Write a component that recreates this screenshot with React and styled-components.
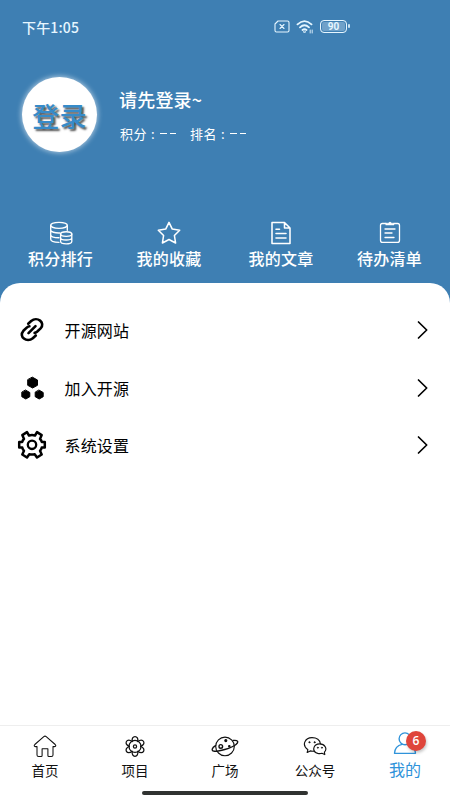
import React from "react";
import styled, { createGlobalStyle } from "styled-components";

const GlobalStyle = createGlobalStyle`
  * { box-sizing: border-box; }
  body {
    margin: 0;
    background: #fff;
    font-family: "Noto Sans CJK SC", "Noto Sans", sans-serif;
  }
`;

const Screen = styled.main`
  width: 450px;
  height: 800px;
  display: flex;
  flex-direction: column;
  overflow: hidden;
  background: #3e7fb3;
`;

const StatusBar = styled.header`
  height: 53px;
  padding: 0 103px 0 22px;
  display: flex;
  align-items: center;
  justify-content: space-between;
  color: #e6f6ff;
`;

const Clock = styled.time`
  font: 500 14px/20px "Noto Sans CJK SC", sans-serif;
  letter-spacing: 0.15px;
`;

const StatusIcons = styled.div`
  display: flex;
  align-items: center;
  gap: 6px;
`;

const Icon = styled.svg`
  display: block;
  flex: none;
  fill: none;
  stroke: currentColor;
  stroke-linecap: round;
  stroke-linejoin: round;
`;

const Battery = styled.span`
  position: relative;
  width: 27px;
  height: 13px;
  border: 1.5px solid #e6f6ff;
  border-radius: 4px;
  background: #6fa1c9;
  box-shadow: inset 0 0 0 1px #3e7fb3;
  display: flex;
  align-items: center;
  justify-content: center;
  font: 700 10px/10px Roboto, sans-serif;
  &::after {
    content: "";
    position: absolute;
    right: -4px;
    top: 3px;
    width: 2px;
    height: 4px;
    border-radius: 1px;
    background: #c9e2f2;
  }
`;

const Profile = styled.section`
  height: 123px;
  padding-left: 22px;
  display: flex;
  align-items: center;
  gap: 22px;
  color: #fff;
`;

const Avatar = styled.div`
  width: 75px;
  height: 75px;
  border-radius: 50%;
  background: #fff;
  box-shadow: 0 0 5px 1px rgba(255, 255, 255, 0.55);
  display: flex;
  align-items: center;
  justify-content: center;
  color: #368bc9;
  font-size: 27px;
  font-weight: 500;
  line-height: 40px;
  letter-spacing: 0.3px;
  padding-top: 2px;
  text-shadow: 2px 2px 2px rgba(20, 20, 20, 0.75);
`;

const UserInfo = styled.div`
  display: flex;
  flex-direction: column;
  gap: 12px;
`;

const UserName = styled.h1`
  margin: 0;
  font-size: 18px;
  font-weight: 500;
  line-height: 26px;
  letter-spacing: 0.2px;
`;

const Stats = styled.div`
  display: flex;
  gap: 14px;
  padding-left: 1px;
  font-size: 13px;
  line-height: 20px;
`;

const Stat = styled.span`
  display: flex;
  align-items: center;
  letter-spacing: 0.5px;
`;

const Colon = styled.span`
  width: 12px;
  text-align: center;
`;

const Dashes = styled.span`
  display: flex;
  gap: 3px;
  padding-left: 1px;
  &::before,
  &::after {
    content: "";
    width: 6.5px;
    height: 1px;
    background: #fff;
  }
`;

const Shortcuts = styled.nav`
  height: 107px;
  padding: 45px 0 0 28px;
  display: grid;
  grid-template-columns: 108.5px 112px 108.5px 65px;
  color: #fff;
`;

const Shortcut = styled.div`
  width: 65px;
  display: flex;
  flex-direction: column;
  align-items: center;
  gap: 1px;
  font-size: 16px;
  font-weight: 500;
  line-height: 24px;
  letter-spacing: 0.2px;
  white-space: nowrap;
`;

const Panel = styled.section`
  flex: 1;
  padding-top: 18.5px;
  border-radius: 20px 20px 0 0;
  background: #fff;
`;

const MenuRow = styled.div`
  height: 57.5px;
  padding: 0 20px 0 17px;
  display: grid;
  grid-template-columns: 30px 1fr 14px;
  column-gap: 17.5px;
  align-items: center;
  color: #000;
  font-size: 16px;
  line-height: 24px;
  letter-spacing: 0.15px;
`;

const TabBar = styled.nav`
  height: 66px;
  border-top: 1px solid #eee;
  background: #fff;
  display: grid;
  grid-template-columns: repeat(5, 90px);
`;

const Tab = styled.div`
  padding-top: ${(p) => (p.$active ? "5px" : "9px")};
  display: flex;
  flex-direction: column;
  align-items: center;
  gap: ${(p) => (p.$active ? "1px" : "0")};
  color: ${(p) => (p.$active ? "#2f93da" : "#111")};
  font-size: ${(p) => (p.$active ? "16px" : "13.5px")};
  line-height: 22px;
`;

const IconHolder = styled.span`
  position: relative;
`;

const Badge = styled.span`
  position: absolute;
  left: 13px;
  top: 0;
  width: 20px;
  height: 20px;
  border-radius: 50%;
  background: #df453b;
  box-shadow: 1px 2px 3px rgba(0, 0, 0, 0.22);
  color: #fff;
  font: 600 12px/20px "Open Sans", sans-serif;
  text-align: center;
`;

const HomeBar = styled.footer`
  height: 9px;
  background: #fff;
  &::before {
    content: "";
    display: block;
    width: 166px;
    height: 4px;
    margin: 0 auto;
    border-radius: 2px;
    background: #303231;
  }
`;

const CoinsIcon = () => (
  <Icon width="24" height="24" viewBox="0 0 24 24" strokeWidth="1.35">
    <ellipse cx="10" cy="4.3" rx="8.3" ry="3" />
    <path d="M1.7 4.3v14c0 1.7 3.5 3 8.3 3M18.3 4.3v5M1.7 9c0 1.8 4 3.2 9.2 3M1.7 13.7c0 1.8 3.5 3 8.3 3" />
    <ellipse cx="17.2" cy="13" rx="5.6" ry="2.3" />
    <path d="M11.6 13v7.5c0 3.1 11.2 3.1 11.2 0V13M11.6 16.7c0 3.1 11.2 3.1 11.2 0" />
  </Icon>
);

const StarIcon = () => (
  <Icon width="24" height="24" viewBox="0 0 24 24" strokeWidth="1.55">
    <path d="m12 1.4 3.3 6.7 7.4 1.1-5.3 5.3 1.2 7.5-6.6-3.5L5.4 22l1.2-7.5-5.3-5.3 7.4-1.1Z" />
  </Icon>
);

const ArticleIcon = () => (
  <Icon width="24" height="24" viewBox="0 0 24 24" strokeWidth="1.55">
    <path d="M3 1.5h12.5L21 7v15.5H3ZM15.5 1.5V7H21M7 8.3h3.5M7 12.5h10M7 17h10" />
  </Icon>
);

const TodoIcon = () => (
  <Icon width="24" height="24" viewBox="0 0 24 24" strokeWidth="1.3">
    <path d="M8 2.5H4.3Q2.5 2.5 2.5 4.5v14.7q0 2.2 2.2 2.2h14.6q2.2 0 2.2-2.2V4.5q0-2-1.8-2H16M7 8h10M7 12h7M7 16.5h9" />
    <path d="M8 2.2h2.3Q12-.1 13.7 2.2H16V4H8Z" fill="currentColor" strokeWidth="0.5" />
  </Icon>
);

const LinkIcon = () => (
  <Icon width="30" height="30" viewBox="0 0 30 30" strokeWidth="2.6">
    <path d="m11.2 8.7 3-2.7c6-5 14.6 1.6 9.4 7.4l-3.6 3.4q-1.2 1-2.4 1.1" />
    <path d="m18.8 20.5-3 2.7c-6 5-14.6-1.6-9.4-7.4l3.6-3.4q1.2-1 2.4-1.1" />
    <path d="m11.5 18.2 7-7" />
  </Icon>
);

const HexagonsIcon = () => (
  <Icon width="30" height="30" viewBox="0 0 30 30" strokeWidth="1">
    <g fill="currentColor">
      <path d="m15.6 4.3 4.9 2.7v5.3l-4.9 2.7-4.9-2.7V7Z" />
      <path d="m8.8 17.2 4 2.3v4.2l-4 2.3-4-2.3v-4.2Z" />
      <path d="m22.2 17.2 4 2.3v4.2l-4 2.3-4-2.3v-4.2Z" />
    </g>
  </Icon>
);

const GearIcon = () => (
  <Icon width="30" height="30" viewBox="0 0 30 30" strokeWidth="2.5">
    <path d="m12 5.5-2-3.4-4.7 3 1.7 3.8q-1.5 1.6-1.7 3H2.2v5.7h3.1q.3 1.7 1.7 3.2l-1.7 3.7 4.7 3 2.3-3.3q2.7.8 5.4 0l2.3 3.3 4.7-3-1.7-3.7q1.4-1.5 1.7-3.2h3.1v-5.7h-3.1q-.2-1.4-1.7-3l1.7-3.8-4.7-3-2 3.4q-3-1-6 0Z" />
    <circle cx="15" cy="14.8" r="4.2" strokeWidth="2.3" />
  </Icon>
);

const Chevron = () => (
  <Icon width="14" height="20" viewBox="0 0 14 20" strokeWidth="1.7">
    <path d="m2.5 2 8.2 8-8.2 8" />
  </Icon>
);

const HomeIcon = () => (
  <Icon width="24" height="24" viewBox="0 0 24 24" strokeWidth="1.05">
    <path d="M4 11.6v8.3q0 1.6 1.6 1.6h2.6q.9 0 .9-1v-6.8h5.8v6.8q0 1 .9 1h2.6q1.6 0 1.6-1.6v-8.3h1.2c1.5 0 2.1-1 1-2.1l-9-7.9q-1.2-1-2.4 0l-9 7.9c-1.1 1.1-.5 2.1 1 2.1Z" />
  </Icon>
);

const AtomIcon = () => (
  <Icon width="24" height="24" viewBox="0 0 24 24" strokeWidth="1.25">
    <circle cx="12" cy="11.4" r="6" />
    {[0, 60, 120, 180, 240, 300].map((angle) => (
      <path
        key={angle}
        d="M9.2 6.4C8.7 3.5 10 1.5 12 1.5s3.3 2 2.8 4.9"
        transform={`rotate(${angle} 12 11.4)`}
      />
    ))}
    <circle cx="12" cy="11.4" r="1.6" />
  </Icon>
);

const PlanetIcon = () => (
  <Icon width="28" height="24" viewBox="0 0 28 24" strokeWidth="1.15">
    <circle cx="14" cy="11.4" r="9.3" />
    <path d="M4.5 10.6C.8 12.9.2 15.4 2.7 16.1c3.8 1 18.2-3.1 22.3-6.6 3.2-2.7 1.6-4.8-3-4" strokeWidth="1.35" />
    <circle cx="9.8" cy="11.4" r="1.8" strokeWidth="1.4" />
    <circle cx="14.8" cy="5.6" r="1" fill="currentColor" />
    <circle cx="18.3" cy="11.3" r=".7" fill="currentColor" />
  </Icon>
);

const WechatIcon = () => (
  <Icon width="24" height="24" viewBox="0 0 24 24" strokeWidth="1.15">
    <path d="M11 16.2q-2 .2-3.8-.3L4.2 17.4l.7-2.7C-1.8 10 2.2 2.6 9 2.6c4.7 0 8 2.5 8.4 6.1" />
    <path d="M21.4 17.2c3.3-3.3.4-8.4-4.6-8.4-7 0-8.2 8-2 9.6q2.2.5 4.1-.1l2.9 1.3Z" />
    <g fill="currentColor" strokeWidth=".5">
      <circle cx="6.4" cy="7.3" r=".7" />
      <circle cx="11.6" cy="7.3" r=".7" />
      <circle cx="14.8" cy="12.7" r=".6" />
      <circle cx="18.9" cy="12.7" r=".6" />
    </g>
  </Icon>
);

const PersonIcon = () => (
  <Icon width="24" height="26" viewBox="0 0 24 26" strokeWidth="1.35">
    <circle cx="12" cy="7.8" r="5.9" />
    <path d="M9 13.3c-4.6 1-7.2 4.2-7.5 9h21c-.3-4.8-2.9-8-7.5-9" />
  </Icon>
);

const shortcuts = [
  ["积分排行", CoinsIcon],
  ["我的收藏", StarIcon],
  ["我的文章", ArticleIcon],
  ["待办清单", TodoIcon],
];

const menuItems = [
  ["开源网站", LinkIcon],
  ["加入开源", HexagonsIcon],
  ["系统设置", GearIcon],
];

const tabs = [
  ["首页", HomeIcon],
  ["项目", AtomIcon],
  ["广场", PlanetIcon],
  ["公众号", WechatIcon],
];

export default function App() {
  return (
    <>
      <GlobalStyle />
      <Screen>
        <StatusBar>
          <Clock>下午1:05</Clock>
          <StatusIcons>
            <Icon width="16" height="13" viewBox="0 0 16 13" strokeWidth="1.1">
              <path d="M4 1h9.5q1.5 0 1.5 1.5v8q0 1.5-1.5 1.5h-11Q1 12 1 10.5V4Zm2 3.5 4 4m0-4-4 4" />
            </Icon>
            <Icon width="18" height="16" viewBox="0 0 18 16" strokeWidth="1.8">
              <path d="M1.5 5.4q7-6.5 14 0M4 8.3q4.5-4.2 9 0M6.5 11q2-1.8 4 0" />
              <circle cx="8.5" cy="12.7" r=".4" />
              <path d="M14.2 11v3m2-3v3" strokeWidth=".9" />
            </Icon>
            <Battery>90</Battery>
          </StatusIcons>
        </StatusBar>
        <Profile>
          <Avatar>登录</Avatar>
          <UserInfo>
            <UserName>请先登录~</UserName>
            <Stats>
              {["积分", "排名"].map((label) => (
                <Stat key={label}>
                  {label}
                  <Colon>:</Colon>
                  <Dashes />
                </Stat>
              ))}
            </Stats>
          </UserInfo>
        </Profile>
        <Shortcuts>
          {shortcuts.map(([label, Glyph]) => (
            <Shortcut key={label}>
              <Glyph />
              {label}
            </Shortcut>
          ))}
        </Shortcuts>
        <Panel>
          {menuItems.map(([label, Glyph]) => (
            <MenuRow key={label}>
              <Glyph />
              {label}
              <Chevron />
            </MenuRow>
          ))}
        </Panel>
        <TabBar>
          {tabs.map(([label, Glyph]) => (
            <Tab key={label}>
              <Glyph />
              {label}
            </Tab>
          ))}
          <Tab $active>
            <IconHolder>
              <PersonIcon />
              <Badge>6</Badge>
            </IconHolder>
            我的
          </Tab>
        </TabBar>
        <HomeBar />
      </Screen>
    </>
  );
}
